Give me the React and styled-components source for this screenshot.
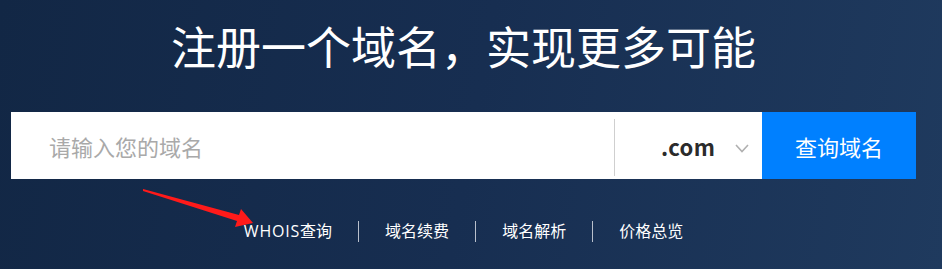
import React from 'react';
import styled, { createGlobalStyle } from 'styled-components';

const GlobalStyle = createGlobalStyle`
  html, body {
    margin: 0;
    padding: 0;
  }
  body {
    font-family: "Noto Sans CJK SC", "Noto Sans", sans-serif;
  }
`;

const Page = styled.div`
  position: relative;
  width: 942px;
  height: 269px;
  box-sizing: border-box;
  padding: 0 26px 0 11px;
  overflow: hidden;
  background: linear-gradient(100deg, #122745 0%, #172e51 50%, #1f3a5e 100%);
`;

const Title = styled.h1`
  margin: 0;
  padding-top: 23px;
  font-size: 45px;
  line-height: 45px;
  font-weight: 400;
  color: #fff;
  text-align: center;
`;

const SearchBar = styled.div`
  display: flex;
  height: 67px;
  margin-top: 44px;
  background: #fff;
`;

const Input = styled.input`
  flex: 1;
  min-width: 0;
  border: none;
  outline: none;
  padding: 0 0 0 38px;
  font-family: inherit;
  font-size: 22px;
  color: #333;
  background: transparent;

  &::placeholder {
    color: #a9a9a9;
  }
`;

const Divider = styled.span`
  width: 1px;
  height: 57px;
  margin-top: 7px;
  background: #cfcfcf;
`;

const Suffix = styled.div`
  width: 147px;
  display: flex;
  align-items: center;
  box-sizing: border-box;
  padding-left: 46px;
  gap: 20px;
  font-size: 22px;
  font-weight: 700;
  letter-spacing: 0.4px;
  color: #2b2b2b;

  svg {
    margin-top: 6px;
  }
`;

const SearchButton = styled.button`
  width: 154px;
  border: none;
  background: #0080ff;
  color: #fff;
  font-family: inherit;
  font-size: 22px;
  cursor: pointer;
`;

const Links = styled.nav`
  display: flex;
  justify-content: center;
  align-items: center;
  margin-top: 42px;
`;

const LinkItem = styled.a`
  padding: 0 26px;
  font-family: "Open Sans", "Noto Sans CJK SC", sans-serif;
  font-size: 16px;
  line-height: 21px;
  color: #fff;
  text-decoration: none;
  border-left: ${(p) => (p.first ? 'none' : '1px solid #b9c0cc')};
`;

const Latin = styled.span`
  letter-spacing: 0.8px;
`;

const Annotation = styled.svg`
  position: absolute;
  left: 0;
  top: 0;
  pointer-events: none;
`;

const Chevron = () => (
  <svg width="14" height="9" viewBox="0 0 14 9">
    <path d="M1 1 L7 7.5 L13 1" fill="none" stroke="#b0b0b0" strokeWidth="1.6" />
  </svg>
);

const links = [
  { key: 'whois', label: <><Latin>WHOIS</Latin>查询</> },
  { key: 'renew', label: '域名续费' },
  { key: 'dns', label: '域名解析' },
  { key: 'price', label: '价格总览' },
];

const App = () => {
  return (
    <Page>
      <GlobalStyle />
      <Title>注册一个域名，实现更多可能</Title>
      <SearchBar>
        <Input placeholder="请输入您的域名" />
        <Divider />
        <Suffix>
          .com
          <Chevron />
        </Suffix>
        <SearchButton>查询域名</SearchButton>
      </SearchBar>
      <Links>
        {links.map((l, i) => (
          <LinkItem key={l.key} first={i === 0} href="#">
            {l.label}
          </LinkItem>
        ))}
      </Links>
      <Annotation width="942" height="269" viewBox="0 0 942 269">
        <polygon
          points="143,189 239,215 241,209 253,223 235,227 237,221 143,191"
          fill="#ff1a1a"
        />
      </Annotation>
    </Page>
  );
};

export default App;
